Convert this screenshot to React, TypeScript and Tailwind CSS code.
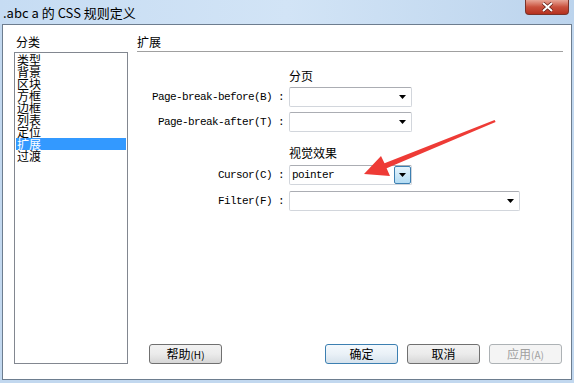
import type { ReactNode } from "react";

const cjk = "font-['Microsoft_YaHei','Noto_Sans_CJK_SC',sans-serif]";
const mono = "font-['Liberation_Mono','Noto_Sans_CJK_SC',monospace] text-[11px] tracking-[-0.6px]";

const categories = ["类型", "背景", "区块", "方框", "边框", "列表", "定位", "扩展", "过渡"];

function Arrow() {
  return (
    <svg width="7" height="4" viewBox="0 0 7 4">
      <path d="M0 0h7L3.5 4z" fill="#000" />
    </svg>
  );
}

function Select({ wide, value, active }: { wide?: boolean; value?: string; active?: boolean }) {
  return (
    <div
      className={`${wide ? "w-[231px]" : "w-[123px]"} flex h-[20px] items-stretch rounded-[2px] border border-[#d2d6dc] border-t-[#abadb3] bg-white`}
    >
      <span className={`${mono} flex flex-1 items-center pl-[2px] text-black`}>{value}</span>
      {active ? (
        <span className="flex w-[17px] items-center justify-center rounded-[2px] border border-[#3c7fb1] bg-gradient-to-b from-[#e5f4fc] to-[#b3dcf3]">
          <Arrow />
        </span>
      ) : (
        <span className="flex w-[18px] items-center justify-center">
          <Arrow />
        </span>
      )}
    </div>
  );
}

function Row({ label, children, className }: { label: string; children: ReactNode; className: string }) {
  return (
    <div className={`flex items-center ${className}`}>
      <div className={`${mono} w-[152px] pr-[5px] text-right text-black`}>{label}</div>
      {children}
    </div>
  );
}

function Button({ children, focused, disabled }: { children: ReactNode; focused?: boolean; disabled?: boolean }) {
  const look = disabled
    ? "border-[#adb2b5] bg-[#f4f4f4] text-[#a0a0a0]"
    : focused
      ? "border-[#3c7fb1] bg-gradient-to-b from-[#f4f9fd] via-[#eaf1f7] to-[#d6e2ec] text-black"
      : "border-[#707070] bg-gradient-to-b from-[#f2f2f2] via-[#ebebeb] to-[#d6d6d6] text-black";
  return (
    <div className={`flex h-[20px] w-[73px] items-center justify-center rounded-[3px] border text-[12px] ${cjk} ${look}`}>
      {children}
    </div>
  );
}

export default function App() {
  return (
    <div className="relative flex h-[383px] w-[574px] flex-col overflow-hidden bg-[#c2d8ef]">
      {/* title bar */}
      <div className="flex h-[24px] justify-between bg-gradient-to-r from-[#c6dcf3] via-[#d2e4f6] to-[#bcd4ed]">
        <span className={`${cjk} self-center pl-[3px] text-[13px] leading-none text-black`}>.abc a 的 CSS 规则定义</span>
        <div className="mr-[5px] flex h-[15px] w-[44px] items-center justify-center rounded-b-[4px] border border-t-0 border-[#7a3329] bg-gradient-to-b from-[#e7a597] via-[#c9503d] to-[#b5311e]">
          <svg width="13" height="10" viewBox="0 0 13 10">
            <path d="M2 1l9 8M11 1l-9 8" stroke="#5b1a12" strokeWidth="3.4" />
            <path d="M2 1l9 8M11 1l-9 8" stroke="#fff" strokeWidth="2" />
          </svg>
        </div>
      </div>

      {/* client area */}
      <div className="mx-[2px] mb-[3px] flex flex-1 border border-[#6d7d8f] bg-white pb-[15px] pl-[11px] pr-[8px] pt-[9px]">
        <div className="flex w-[114px] flex-col">
          <div className={`${cjk} mb-[2px] h-[16px] pl-[2px] text-[12px] leading-[16px] text-black`}>分类</div>
          <div className="flex-1 border border-[#828790] p-px">
            {categories.map((c) => (
              <div
                key={c}
                className={`h-[12px] pl-[1px] text-[12px] leading-[12px] ${cjk} ${c === "扩展" ? "bg-[#3399ff] text-white" : "text-black"}`}
              >
                {c}
              </div>
            ))}
          </div>
        </div>

        <div className="ml-[9px] flex flex-1 flex-col">
          <div className={`${cjk} h-[18px] border-b border-[#a0a0a0] text-[12px] leading-[16px] text-black`}>扩展</div>

          <div className={`${cjk} mt-[16px] h-[16px] pl-[152px] text-[12px] leading-[16px] text-black`}>分页</div>
          <Row label="Page-break-before(B) :" className="mt-[3px]">
            <Select />
          </Row>
          <Row label="Page-break-after(T) :" className="mt-[5px]">
            <Select />
          </Row>

          <div className={`${cjk} mt-[13px] h-[16px] pl-[152px] text-[12px] leading-[16px] text-black`}>视觉效果</div>
          <Row label="Cursor(C) :" className="mt-[4px]">
            <Select value="pointer" active />
          </Row>
          <Row label="Filter(F) :" className="mt-[6px]">
            <Select wide />
          </Row>

          <div className="flex-1" />

          <div className="flex items-center pl-[12px] pr-[1px]">
            <Button>
              帮助<span className="text-[10px]">(H)</span>
            </Button>
            <div className="flex-1" />
            <div className="flex gap-[9px]">
              <Button focused>确定</Button>
              <Button>取消</Button>
              <Button disabled>
                应用<span className="text-[10px]">(A)</span>
              </Button>
            </div>
          </div>
        </div>
      </div>

      {/* red annotation arrow */}
      <svg className="pointer-events-none absolute left-0 top-0" width="574" height="383">
        <polygon
          points="364,174 381,156 384.5,163.2 494.6,120.1 495.6,122.1 386.6,168.2 390,176"
          fill="#ee3b36"
        />
      </svg>
    </div>
  );
}
